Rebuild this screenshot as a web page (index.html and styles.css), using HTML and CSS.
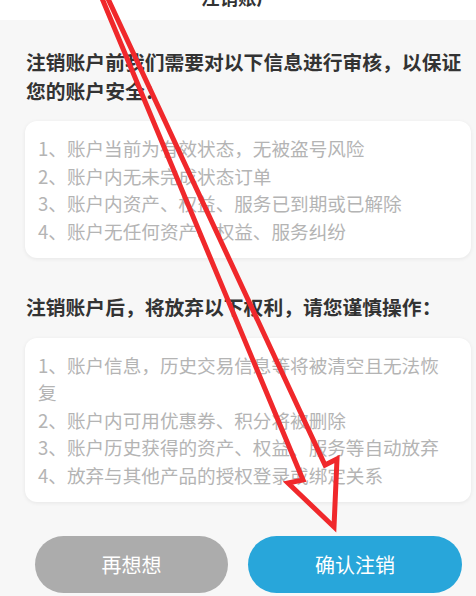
FILE: index.html
```html
<!DOCTYPE html>
<html lang="zh-CN">
<head>
<meta charset="utf-8">
<title>注销账户</title>
<link rel="stylesheet" href="styles.css">
</head>
<body>
<div class="page">
  <header class="topbar"><span class="topbar-title">注销账户</span></header>
  <main class="content">
    <h2 class="section-title">注销账户前我们需要对以下信息进行审核，以保证您的账户安全：</h2>
    <div class="card">
      <div class="item">1、账户当前为有效状态，无被盗号风险</div>
      <div class="item">2、账户内无未完成状态订单</div>
      <div class="item">3、账户内资产、权益、服务已到期或已解除</div>
      <div class="item">4、账户无任何资产、权益、服务纠纷</div>
    </div>
    <h2 class="section-title second">注销账户后，将放弃以下权利，请您谨慎操作：</h2>
    <div class="card">
      <div class="item">1、账户信息，历史交易信息等将被清空且无法恢复</div>
      <div class="item">2、账户内可用优惠券、积分将被删除</div>
      <div class="item">3、账户历史获得的资产、权益、服务等自动放弃</div>
      <div class="item">4、放弃与其他产品的授权登录或绑定关系</div>
    </div>
    <div class="actions">
      <button class="btn btn-cancel">再想想</button>
      <button class="btn btn-confirm">确认注销</button>
    </div>
  </main>
  <svg class="annotation" width="476" height="596" viewBox="0 0 476 596" aria-hidden="true">
    <polyline points="86,-40 303,480 288,483 334,527 337,459 325,465 90,-40" fill="none" stroke="#f0282b" stroke-width="5" stroke-linejoin="miter" stroke-miterlimit="10"/>
  </svg>
</div>
</body>
</html>
```
FILE: styles.css
```css
html, body {
  margin: 0;
  padding: 0;
}
body {
  background: #f7f7f7;
  font-family: "Noto Sans CJK SC", "Noto Sans", sans-serif;
}
.page {
  position: relative;
  width: 476px;
  height: 596px;
  overflow: hidden;
  background: #f7f7f7;
}
.topbar {
  height: 20px;
  background: #ffffff;
  display: flex;
  justify-content: center;
  align-items: flex-end;
  overflow: hidden;
}
.topbar-title {
  font-size: 18.5px;
  line-height: 18px;
  font-weight: bold;
  color: #333333;
  margin-bottom: 14px;
}
.content {
  padding: 28px 5px 0 25px;
}
.section-title {
  margin: 0;
  padding-left: 1px;
  font-size: 19.8px;
  line-height: 28.5px;
  font-weight: bold;
  color: #333333;
}
.section-title.second {
  margin-top: 35px;
}
.card {
  margin-top: 16px;
  padding: 13px 20px 14px 13px;
  background: #ffffff;
  border-radius: 12px;
  box-shadow: 0 1px 4px rgba(0, 0, 0, 0.07);
  font-size: 18.6px;
  line-height: 27.5px;
  color: #b4b4b4;
}
.section-title.second + .card {
  margin-top: 16px;
}
.actions {
  margin-top: 34px;
  padding-left: 10px;
  display: flex;
  gap: 20px;
}
.btn {
  height: 57px;
  border: none;
  border-radius: 29px;
  color: #ffffff;
  font-family: "Noto Sans CJK SC", "Noto Sans", sans-serif;
  font-size: 20px;
  padding: 0;
}
.btn-cancel {
  width: 193px;
  background: #acacac;
}
.btn-confirm {
  width: 214px;
  background: #28a6da;
}
.annotation {
  position: absolute;
  top: 0;
  left: 0;
  pointer-events: none;
}
```
